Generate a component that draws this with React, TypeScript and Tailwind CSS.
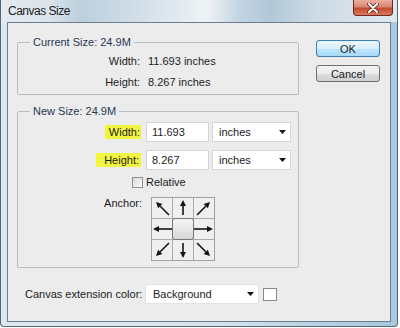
type Line = { x1: number; y1: number; x2: number; y2: number };

// arrow inside a 20x20 anchor cell, head at (x2, y2)
function Arrow({ x1, y1, x2, y2 }: Line) {
  const dx = x2 - x1;
  const dy = y2 - y1;
  const len = Math.hypot(dx, dy);
  const ux = dx / len;
  const uy = dy / len;
  const bx = x2 - ux * 6;
  const by = y2 - uy * 6;
  const px = -uy * 3;
  const py = ux * 3;
  return (
    <svg width="20" height="20" viewBox="0 0 20 20">
      <line x1={x1} y1={y1} x2={bx} y2={by} stroke="#141414" strokeWidth="1.6" />
      <polygon
        points={`${x2},${y2} ${bx + px},${by + py} ${bx - px},${by - py}`}
        fill="#141414"
      />
    </svg>
  );
}

const anchorArrows: (Line | null)[] = [
  { x1: 17, y1: 17, x2: 4, y2: 4 },
  { x1: 10, y1: 17, x2: 10, y2: 2 },
  { x1: 3, y1: 17, x2: 16, y2: 4 },
  { x1: 20, y1: 10, x2: 1, y2: 10 },
  null,
  { x1: 0, y1: 10, x2: 19, y2: 10 },
  { x1: 17, y1: 3, x2: 4, y2: 16 },
  { x1: 10, y1: 3, x2: 10, y2: 18 },
  { x1: 3, y1: 3, x2: 16, y2: 16 },
];

const DropArrow = () => (
  <svg width="7" height="4" viewBox="0 0 7 4" className="ml-auto mr-[4px]">
    <polygon points="0,0 7,0 3.5,4" fill="#111" />
  </svg>
);

const App = () => {
  return (
    <div className="w-[400px] h-[328px] bg-white font-['Liberation_Sans',Arial,sans-serif] text-[11px] text-[#1c1c1c]">
      <div className="w-[398px] h-[327px] flex flex-col border-x border-b border-[#4f677b] rounded-b-[4px] bg-[linear-gradient(90deg,#dfe8ef_0%,#d7e3ec_55%,#b3cde0_85%,#a9c8de_100%)]">
        {/* title bar */}
        <div className="h-[22px] flex items-start bg-[linear-gradient(90deg,#e4eaef_0%,#dbe4eb_12%,#bccfdd_20%,#c7d7e3_28%,#e2eaf0_45%,#eef3f6_52%,#c3d5e2_60%,#b2c8d8_68%,#cddbe6_80%,#dfe8ee_100%)]">
          <span className="ml-[7px] mt-[4px] leading-[14px] text-[12px] text-[#1e1e1e] tracking-[-0.5px]">
            Canvas Size
          </span>
          <div className="ml-auto mr-[4px] w-[40px] h-[16px] flex items-center justify-center border border-t-0 border-[#6e2a1d] rounded-b-[4px] bg-[linear-gradient(180deg,#eab0a0_0%,#d88671_45%,#c44a32_55%,#d9785f_100%)]">
            <svg width="12" height="10" viewBox="0 0 12 10">
              <path d="M2 1 L10 9 M10 1 L2 9" stroke="#5a2418" strokeWidth="3.6" strokeLinecap="round" />
              <path d="M2 1 L10 9 M10 1 L2 9" stroke="#ffffff" strokeWidth="2" strokeLinecap="round" />
            </svg>
          </div>
        </div>

        {/* client area */}
        <div className="mx-[6px] h-[300px] border border-[#6b7f90] bg-[#ececec]">
          <div className="flex pt-[12px] pl-[9px]">
            <div className="w-[282px]">
              <fieldset className="border border-[#b9bec2] rounded-[2px]">
                <legend className="ml-[12px] px-[3px] leading-[14px] text-[#1f3855]">Current Size: 24.9M</legend>
                <div className="flex flex-col gap-[7px] pt-[5px] pb-[5px] leading-[14px]">
                  <div className="flex">
                    <span className="w-[122px] text-right">Width:</span>
                    <span className="ml-[8px]">11.693 inches</span>
                  </div>
                  <div className="flex">
                    <span className="w-[122px] text-right">Height:</span>
                    <span className="ml-[8px]">8.267 inches</span>
                  </div>
                </div>
              </fieldset>

              <fieldset className="mt-[9px] border border-[#b9bec2] rounded-[2px]">
                <legend className="ml-[12px] px-[3px] leading-[14px] text-[#1f3855]">New Size: 24.9M</legend>
                <div className="flex flex-col pt-[4px] pb-[6px]">
                  <div className="flex items-center h-[20px]">
                    <div className="w-[123px] flex justify-end">
                      <span className="bg-[#f2f53f] pl-[4px] pr-[1px] leading-[14px]">Width:</span>
                    </div>
                    <div className="ml-[5px] w-[63px] h-[20px] flex items-center pl-[5px] bg-white border border-[#d6d6d6]">
                      11.693
                    </div>
                    <div className="ml-[3px] w-[79px] h-[20px] flex items-center pl-[6px] bg-white border border-[#d6d6d6]">
                      inches
                      <DropArrow />
                    </div>
                  </div>
                  <div className="flex items-center h-[20px] mt-[8px]">
                    <div className="w-[123px] flex justify-end">
                      <span className="bg-[#f2f53f] pl-[8px] pr-[2px] leading-[14px]">Height:</span>
                    </div>
                    <div className="ml-[5px] w-[63px] h-[20px] flex items-center pl-[5px] bg-white border border-[#d6d6d6]">
                      8.267
                    </div>
                    <div className="ml-[3px] w-[79px] h-[20px] flex items-center pl-[6px] bg-white border border-[#d6d6d6]">
                      inches
                      <DropArrow />
                    </div>
                  </div>
                  <div className="flex items-center h-[14px] mt-[5px]">
                    <div className="ml-[114px] w-[11px] h-[11px] border border-[#8e9091] bg-[linear-gradient(135deg,#d9dadb,#fbfbfb)]" />
                    <span className="ml-[3px] leading-[14px]">Relative</span>
                  </div>
                  <div className="flex items-start mt-[8px]">
                    <span className="w-[124px] text-right leading-[14px] -mt-[1px]">Anchor:</span>
                    <div className="ml-[9px] grid grid-cols-[20px_20px_20px] grid-rows-[20px_20px_20px] gap-px bg-[#aaaaaa] border border-[#a2a2a2]">
                      {anchorArrows.map((a, i) =>
                        a ? (
                          <div key={i} className="bg-[#efefef]">
                            <Arrow {...a} />
                          </div>
                        ) : (
                          <div key={i} className="bg-[#efefef]">
                            <div className="-m-px w-[22px] h-[22px] rounded-[3px] border border-[#777] bg-[linear-gradient(180deg,#f7f7f7,#d6d6d6)]" />
                          </div>
                        )
                      )}
                    </div>
                  </div>
                </div>
              </fieldset>
            </div>

            <div className="ml-[17px] flex flex-col">
              <button className="mt-[5px] w-[64px] h-[17px] flex items-center justify-center rounded-[3px] border border-[#3c7fb1] bg-[linear-gradient(180deg,#eaf6fd_0%,#d9f0fc_50%,#bee6fd_51%,#a7d9f5_100%)] text-[11px] leading-[14px]">
                OK
              </button>
              <button className="mt-[8px] w-[64px] h-[17px] flex items-center justify-center rounded-[3px] border border-[#707070] bg-[linear-gradient(180deg,#f2f2f2_0%,#ebebeb_50%,#dddddd_51%,#cfcfcf_100%)] text-[11px] leading-[14px]">
                Cancel
              </button>
            </div>
          </div>

          <div className="flex items-center mt-[16px] pl-[17px] h-[20px]">
            <span className="w-[120px] leading-[14px]">Canvas extension color:</span>
            <div className="w-[114px] h-[20px] flex items-center pl-[7px] bg-white border border-[#e2e2e2]">
              Background
              <DropArrow />
            </div>
            <div className="ml-[4px] w-[14px] h-[13px] bg-white border border-[#8a8a8a]" />
          </div>
        </div>
      </div>
    </div>
  );
};

export default App;
